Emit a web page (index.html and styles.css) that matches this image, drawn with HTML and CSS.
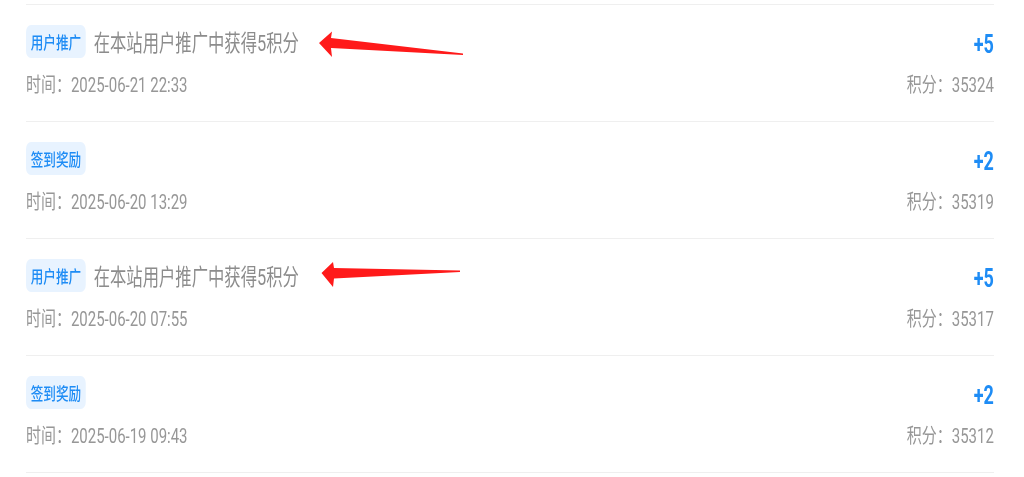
FILE: index.html
```html
<!DOCTYPE html>
<html lang="zh-CN">
<head>
    <meta charset="UTF-8">
    <meta name="viewport" content="width=device-width, initial-scale=1.0">
    <title>积分明细</title>
    <link rel="stylesheet" href="styles.css">
</head>
<body>
    <ul class="points-list">
        <li class="points-item">
            <div class="item-main">
                <div class="item-title">
                    <span class="tag">用户推广</span>
                    <span class="desc">在本站用户推广中获得5积分</span>
                </div>
                <div class="item-time">时间：2025-06-21 22:33</div>
            </div>
            <div class="item-side">
                <div class="item-change">+5</div>
                <div class="item-total">积分：35324</div>
            </div>
            <svg class="arrow" viewBox="0 0 170 40" width="170" height="40">
                <path d="M13 18 L26 6.5 L25 13 L157 28.5 L157 30 L25 23 L26 32 Z"/>
            </svg>
        </li>
        <li class="points-item">
            <div class="item-main">
                <div class="item-title">
                    <span class="tag">签到奖励</span>
                </div>
                <div class="item-time">时间：2025-06-20 13:29</div>
            </div>
            <div class="item-side">
                <div class="item-change">+2</div>
                <div class="item-total">积分：35319</div>
            </div>
        </li>
        <li class="points-item">
            <div class="item-main">
                <div class="item-title">
                    <span class="tag">用户推广</span>
                    <span class="desc">在本站用户推广中获得5积分</span>
                </div>
                <div class="item-time">时间：2025-06-20 07:55</div>
            </div>
            <div class="item-side">
                <div class="item-change">+5</div>
                <div class="item-total">积分：35317</div>
            </div>
            <svg class="arrow" viewBox="0 0 170 40" width="170" height="40">
                <path d="M15.5 14 L27 3 L28 9 L154 11.5 L154 13 L28 19.5 L27 28 Z"/>
            </svg>
        </li>
        <li class="points-item">
            <div class="item-main">
                <div class="item-title">
                    <span class="tag">签到奖励</span>
                </div>
                <div class="item-time">时间：2025-06-19 09:43</div>
            </div>
            <div class="item-side">
                <div class="item-change">+2</div>
                <div class="item-total">积分：35312</div>
            </div>
        </li>
    </ul>
</body>
</html>
```

FILE: styles.css
```css
* { margin: 0; padding: 0; box-sizing: border-box; }
body {
    font-family: Roboto, "Noto Sans CJK SC", sans-serif;
    background: #fff;
    color: #999;
}
.points-list {
    list-style: none;
    margin: 4px 30px 0 26px;
    border-bottom: 1px solid #efefef;
}
.points-item {
    position: relative;
    display: flex;
    justify-content: space-between;
    border-top: 1px solid #efefef;
    padding: 20px 0 24px;
}
/* the source screen is squeezed sideways */
.item-main {
    transform: scaleX(0.72);
    transform-origin: left center;
}
.item-side {
    transform: scaleX(0.72);
    transform-origin: right center;
    text-align: right;
}
.item-title {
    display: flex;
    align-items: center;
    gap: 11px;
    height: 33px;
    margin-bottom: 15px;
}
.tag {
    display: flex;
    align-items: center;
    height: 33px;
    padding: 0 6.5px;
    border-radius: 7px;
    background: #e8f3ff;
    color: #1e8cf5;
    font-size: 17.5px;
    font-weight: 500;
}
.desc {
    font-size: 22.7px;
    color: #8c8c8c;
}
.item-time,
.item-total {
    font-size: 20.8px;
    line-height: 24px;
    color: #979797;
}
.item-change {
    height: 33px;
    line-height: 33px;
    padding-top: 3px;
    margin-bottom: 15px;
    font-size: 25px;
    font-weight: 700;
    color: #1e8cf5;
}
.arrow {
    position: absolute;
    left: 280px;
    top: 20px;
    fill: #ff1a1a;
    filter: blur(0.4px);
}
```
